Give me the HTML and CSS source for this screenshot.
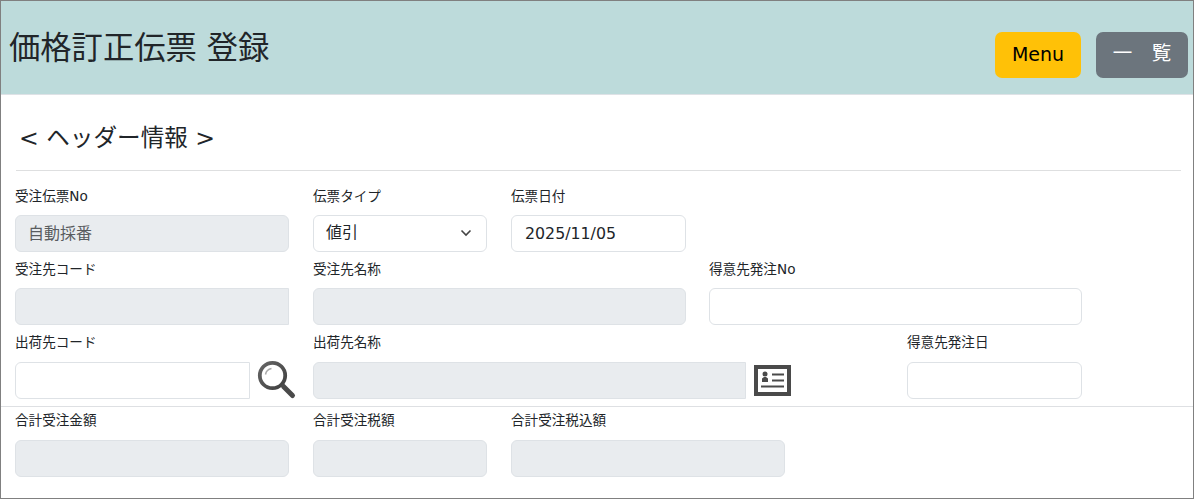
FILE: index.html
```html
<!DOCTYPE html>
<html lang="ja">
<head>
<meta charset="utf-8">
<title>価格訂正伝票 登録</title>
<link rel="stylesheet" href="styles.css">
</head>
<body>
<div class="window">
  <header class="top">
    <h1 class="title">価格訂正伝票 登録</h1>
    <div class="actions">
      <button class="btn btn-menu" type="button">Menu</button>
      <button class="btn btn-list" type="button">一　覧</button>
    </div>
  </header>
  <main class="content">
    <h2 class="section">&lt; ヘッダー情報 &gt;</h2>
    <hr class="rule">
    <div class="row r1">
      <div class="field w274"><label class="lbl">受注伝票No</label><div class="box off">自動採番</div></div>
      <div class="field w174"><label class="lbl">伝票タイプ</label>
        <div class="box sel">値引
          <svg class="chev" width="12" height="8" viewBox="0 0 12 8"><path d="M1.500 1.500 6 6l4.500-4.500" fill="none" stroke="#444" stroke-width="1.600"/></svg>
        </div>
      </div>
      <div class="field w175"><label class="lbl">伝票日付</label><div class="box date">2025/11/05</div></div>
    </div>
    <div class="row r2">
      <div class="field w274"><label class="lbl">受注先コード</label><div class="box off square-r"></div></div>
      <div class="field w373"><label class="lbl">受注先名称</label><div class="box off"></div></div>
      <div class="field w373 shift"><label class="lbl">得意先発注No</label><div class="box"></div></div>
    </div>
    <div class="row r3">
      <div class="field w274"><label class="lbl">出荷先コード</label>
        <div class="group">
          <div class="box grow square-r"></div>
          <svg class="icon-search" width="40" height="40" viewBox="0 0 40 40">
            <defs>
              <linearGradient id="ring" x1="0" y1="0" x2="1" y2="1">
                <stop offset="0" stop-color="#666"/>
                <stop offset="1" stop-color="#3f3f3f"/>
              </linearGradient>
            </defs>
            <circle cx="15.500" cy="15.500" r="12.700" fill="#fff" stroke="url(#ring)" stroke-width="3.800"/>
            <path d="M8.500 14.500a7.500 7.500 0 0 1 6-6" fill="none" stroke="#aaa" stroke-width="1.500"/>
            <path d="M26.500 26.500l9 9" stroke="#4a4a4a" stroke-width="5" stroke-linecap="round"/>
          </svg>
        </div>
      </div>
      <div class="field w570"><label class="lbl">出荷先名称</label>
        <div class="group">
          <div class="box off w433 square-r"></div>
          <svg class="icon-card" width="37" height="31" viewBox="0 0 37 31">
            <rect x="2" y="2" width="33" height="27" fill="#fff" stroke="#4a4a4a" stroke-width="4"/>
            <circle cx="11" cy="9" r="2.500" fill="#4a4a4a"/>
            <path d="M8 17v-3.500l2-1.500h2l2 1.500V17z" fill="#4a4a4a"/>
            <rect x="18" y="8.500" width="12" height="2" fill="#4a4a4a"/>
            <rect x="18" y="14.500" width="12" height="2" fill="#4a4a4a"/>
            <rect x="7" y="20.500" width="23" height="2" fill="#4a4a4a"/>
          </svg>
        </div>
      </div>
      <div class="field w175"><label class="lbl">得意先発注日</label><div class="box"></div></div>
    </div>
    <hr class="rule-full">
    <div class="row r4">
      <div class="field w274"><label class="lbl">合計受注金額</label><div class="box off"></div></div>
      <div class="field w174"><label class="lbl">合計受注税額</label><div class="box off"></div></div>
      <div class="field w274"><label class="lbl">合計受注税込額</label><div class="box off"></div></div>
    </div>
  </main>
</div>
</body>
</html>
```

FILE: styles.css
```css
* { box-sizing: border-box; }
html, body { margin: 0; padding: 0; background: #fff; }
body {
  font-family: "DejaVu Sans", "Noto Sans CJK JP", sans-serif;
  color: #212529;
}
.window {
  width: 1194px;
  height: 499px;
  border: 1px solid #808080;
  overflow: hidden;
}
.top {
  height: 94px;
  background: #bddbdb;
  border-bottom: 1px solid #dee2e6;
  display: flex;
  justify-content: space-between;
  align-items: flex-start;
  padding: 31px 5px 0 8px;
}
.title {
  margin: -2px 0 0;
  font-size: 31.300px;
  font-weight: 400;
  line-height: 37px;
}
.actions { display: flex; gap: 15px; }
.btn {
  height: 46px;
  border: 0;
  border-radius: 7px;
  font-family: "DejaVu Sans", "Noto Sans CJK JP", sans-serif;
  font-size: 19px;
  line-height: 24px;
  padding: 0 0 2px;
}
.btn-menu { width: 86px; background: #ffc107; color: #000; }
.btn-list { width: 92px; background: #6c757d; color: #fff; font-size: 19.500px; padding-bottom: 3px; }
.content { padding: 0 12px 0 14px; }
.section {
  margin: 26px 0 0 4px;
  font-size: 23.600px;
  font-weight: 400;
  line-height: 34px;
}
.rule { margin: 15px 0 0 1px; border: 0; border-top: 1px solid #dedfe0; width: 1165px; }
.rule-full { margin: 7px 0 0 -14px; border: 0; border-top: 1px solid #dee0e3; width: 1192px; }
.row { display: flex; gap: 24px; }
.r1 { margin-top: 14px; }
.r2 { margin-top: 6px; }
.r3 { margin-top: 6px; }
.r4 { margin-top: 2px; }
.field { flex: none; }
.shift { margin-left: -1px; }
.w174 { width: 174px; }
.w175 { width: 175px; }
.w274 { width: 274px; }
.w373 { width: 373px; }
.w570 { width: 570px; }
.w433 { width: 433px; flex: none; }
.lbl {
  display: block;
  height: 23px;
  font-size: 13.600px;
  line-height: 23px;
  margin-bottom: 7px;
}
.r3 .lbl { margin-bottom: 8px; }
.r4 .lbl { margin-bottom: 8px; }
.box {
  height: 37px;
  border: 1px solid #dee2e6;
  border-radius: 6px;
  font-size: 16px;
  line-height: 35px;
  padding: 0 12px;
  background: #fff;
  color: #212529;
}
.date { font-size: 15.800px; padding-left: 13px; }
.off { background: #e9ecef; color: #595c5f; }
.sel { display: flex; justify-content: space-between; align-items: center; padding: 0 14px 2px 12px; }
.square-r { border-radius: 6px 0 0 6px; }
.group { display: flex; align-items: flex-start; height: 37px; }
.grow { width: 235px; flex: none; }
.icon-search { flex: none; margin: -2px -19px 0 7px; }
.icon-card { flex: none; margin: 3px 0 0 8px; }
```
